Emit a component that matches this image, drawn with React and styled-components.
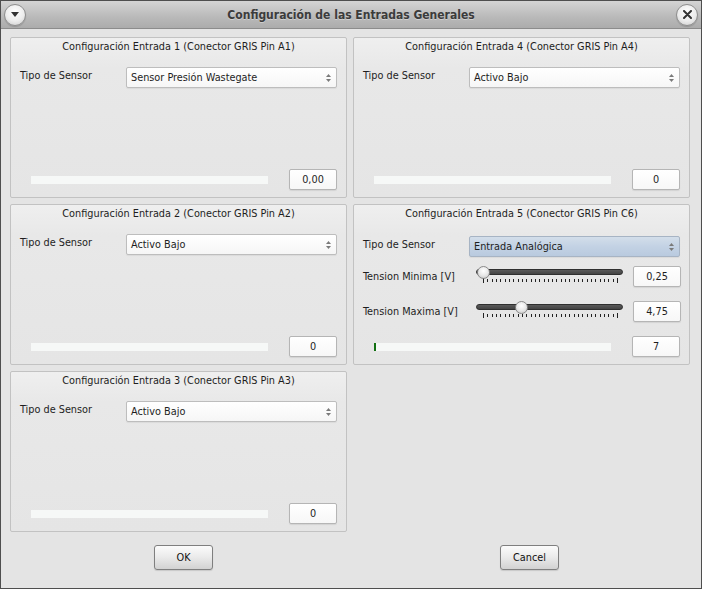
import React from "react";
import styled, { createGlobalStyle } from "styled-components";

const Global = createGlobalStyle`
  html, body { margin: 0; padding: 0; background: #e4e4e4; }
  * { box-sizing: border-box; }
`;

const FONT = `"DejaVu Sans Condensed", "DejaVu Sans", sans-serif`;

const Window = styled.div`
  width: 702px;
  height: 589px;
  border: 1px solid #4e4e4e;
  background: #e4e4e4;
  display: flex;
  flex-direction: column;
  font-family: ${FONT};
  font-size: 10.8px;
  color: #1e1e1e;
`;

const TitleBar = styled.div`
  height: 28px;
  flex: none;
  display: flex;
  align-items: center;
  justify-content: space-between;
  padding: 0 3px 0 3px;
  background: linear-gradient(#d4d4d4, #b9b9b9 60%, #acacac);
  border-bottom: 1px solid #8c8c8c;
`;

const Title = styled.div`
  flex: 1;
  text-align: center;
  font-weight: bold;
  font-size: 12px;
  color: #3b3b3b;
  text-shadow: 0 1px 0 rgba(255, 255, 255, 0.35);
`;

const RoundButton = styled.div`
  width: 22px;
  height: 22px;
  border-radius: 50%;
  border: 1px solid #8e8e8e;
  background: radial-gradient(circle at 50% 35%, #ffffff, #ececec 55%, #c9c9c9);
  box-shadow: 0 1px 1px rgba(0, 0, 0, 0.15);
  display: flex;
  align-items: center;
  justify-content: center;
`;

const Content = styled.div`
  flex: 1;
  display: flex;
  flex-direction: column;
  padding: 8px 11px 0 9px;
`;

const Grid = styled.div`
  display: grid;
  grid-template-columns: 337px 337px;
  grid-template-rows: repeat(3, 161px);
  column-gap: 6px;
  row-gap: 6px;
`;

const Group = styled.div`
  border: 1px solid #c2c2c2;
  border-radius: 2px;
  background: linear-gradient(#efefef, #e8e8e8 30px, #e5e5e5);
  display: flex;
  flex-direction: column;
  padding: 0 9px 7px 9px;
`;

const GroupTitle = styled.div`
  margin-top: 1px;
  line-height: 16px;
  text-align: center;
  color: #1e1e1e;
`;

const Row = styled.div`
  display: flex;
  align-items: ${(p) => (p.$top ? "flex-start" : "center")};
  margin-top: ${(p) => p.$mt || 0}px;
  height: 21px;
`;

const Label = styled.div`
  width: 106px;
  flex: none;
  line-height: 16px;
  margin-top: ${(p) => (p.$top ? 1 : 0)}px;
  white-space: nowrap;
`;

const Combo = styled.div`
  flex: 1;
  height: 21px;
  border: 1px solid ${(p) => (p.$active ? "#a7b4c4" : "#bdbdbd")};
  border-radius: 2px;
  background: ${(p) =>
    p.$active
      ? "linear-gradient(#d3deea, #c3d2e4 50%, #b9cadf)"
      : "linear-gradient(#ffffff, #f6f6f6)"};
  display: flex;
  align-items: center;
  padding-left: 4px;
  box-shadow: 0 1px 1px rgba(0, 0, 0, 0.06);
`;

const ComboText = styled.span`
  flex: 1;
`;

const ComboArrows = styled.div`
  width: 16px;
  display: flex;
  justify-content: center;
`;

const Spin = styled.div`
  width: 48px;
  height: 21px;
  flex: none;
  border: 1px solid #b5b5b5;
  border-radius: 2px;
  background: linear-gradient(#ffffff, #f7f7f7);
  box-shadow: 0 1px 1px rgba(0, 0, 0, 0.08);
  display: flex;
  align-items: center;
  justify-content: center;
`;

const BottomRow = styled.div`
  margin-top: auto;
  display: flex;
  align-items: center;
  height: 21px;
  gap: 21px;
  padding-left: 11px;
`;

const Bar = styled.div`
  flex: 1;
  height: 8px;
  background: #f6f8f7;
  display: flex;
`;

const Chunk = styled.div`
  height: 8px;
  background: #127012;
`;

const SliderBox = styled.div`
  flex: 1;
  height: 21px;
  margin-right: 6px;
  position: relative;
  display: flex;
  flex-direction: column;
`;

const Groove = styled.div`
  margin: 3px 4px 0 7px;
  height: 6px;
  border-radius: 3px;
  border: 1px solid #2f2f2f;
  background: linear-gradient(#5a5a5a, #444);
`;

const Handle = styled.div`
  position: absolute;
  top: 0;
  width: 13px;
  height: 13px;
  border-radius: 50%;
  border: 1px solid #8a8a8a;
  background: radial-gradient(circle at 50% 35%, #ffffff, #e6e6e6 55%, #bdbdbd);
`;

const Ticks = styled.svg`
  display: block;
  margin-top: 3px;
`;

const ButtonRow = styled.div`
  display: flex;
  padding: 13px 0 0 144px;
  gap: 287px;
`;

const Button = styled.div`
  width: 59px;
  height: 25px;
  border: 1px solid #7f7f7f;
  border-radius: 3px;
  background: linear-gradient(#fbfbfb, #ececec 45%, #d2d2d2);
  box-shadow: 0 1px 1px rgba(0, 0, 0, 0.12);
  display: flex;
  align-items: center;
  justify-content: center;
  color: #111;
`;

const UpDown = () => (
  <svg width="7" height="10" viewBox="0 0 7 10">
    <path d="M3.5 1 L6 4 L1 4 Z" fill="#7a7a7a" />
    <path d="M3.5 9 L6 6 L1 6 Z" fill="#7a7a7a" />
  </svg>
);

const SliderTicks = () => {
  const lines = [];
  const n = 32;
  const x0 = 14, x1 = 148;
  for (let i = 0; i < n; i++) {
    const x = Math.round(x0 + ((x1 - x0) * i) / (n - 1)) + 0.5;
    const end = i === 0 || i === n - 1;
    lines.push(<line key={i} x1={x} x2={x} y1={end ? 0 : 1} y2={end ? 5 : 4} stroke="#222" strokeWidth="1" />);
  }
  return (
    <Ticks width="158" height="6" viewBox="0 0 158 6">
      {lines}
    </Ticks>
  );
};

const Slider = ({ pos }) => (
  <SliderBox>
    <Groove />
    <Handle style={{ left: pos }} />
    <SliderTicks />
  </SliderBox>
);

const SensorRow = ({ value, active, mt }) => (
  <Row $top $mt={mt}>
    <Label $top>Tipo de Sensor</Label>
    <Combo $active={active}>
      <ComboText>{value}</ComboText>
      <ComboArrows>
        <UpDown />
      </ComboArrows>
    </Combo>
  </Row>
);

const Progress = ({ value, fill }) => (
  <BottomRow>
    <Bar>{fill ? <Chunk style={{ width: fill }} /> : null}</Bar>
    <Spin>{value}</Spin>
  </BottomRow>
);

const SimpleGroup = ({ title, sensor, value }) => (
  <Group>
    <GroupTitle>{title}</GroupTitle>
    <SensorRow value={sensor} mt={12} />
    <Progress value={value} />
  </Group>
);

export default function App() {
  return (
    <>
      <Global />
      <Window>
        <TitleBar>
          <RoundButton>
            <svg width="8" height="5" viewBox="0 0 8 5">
              <path d="M0 0 L8 0 L4 5 Z" fill="#333" />
            </svg>
          </RoundButton>
          <Title>Configuración de las Entradas Generales</Title>
          <RoundButton>
            <svg width="9" height="9" viewBox="0 0 9 9">
              <path d="M1 1 L8 8 M8 1 L1 8" stroke="#333" strokeWidth="2" strokeLinecap="round" />
            </svg>
          </RoundButton>
        </TitleBar>
        <Content>
          <Grid>
            <SimpleGroup title="Configuración Entrada 1 (Conector GRIS Pin A1)" sensor="Sensor Presión Wastegate" value="0,00" />
            <SimpleGroup title="Configuración Entrada 4 (Conector GRIS Pin A4)" sensor="Activo Bajo" value="0" />
            <SimpleGroup title="Configuración Entrada 2 (Conector GRIS Pin A2)" sensor="Activo Bajo" value="0" />
            <Group>
              <GroupTitle>Configuración Entrada 5 (Conector GRIS Pin C6)</GroupTitle>
              <SensorRow value="Entrada Analógica" active mt={14} />
              <Row $mt={9}>
                <Label>Tension Minima [V]</Label>
                <Slider pos={8} />
                <Spin>0,25</Spin>
              </Row>
              <Row $mt={14}>
                <Label>Tension Maxima [V]</Label>
                <Slider pos={46} />
                <Spin>4,75</Spin>
              </Row>
              <Progress value="7" fill={2} />
            </Group>
            <SimpleGroup title="Configuración Entrada 3 (Conector GRIS Pin A3)" sensor="Activo Bajo" value="0" />
          </Grid>
          <ButtonRow>
            <Button>OK</Button>
            <Button>Cancel</Button>
          </ButtonRow>
        </Content>
      </Window>
    </>
  );
}
